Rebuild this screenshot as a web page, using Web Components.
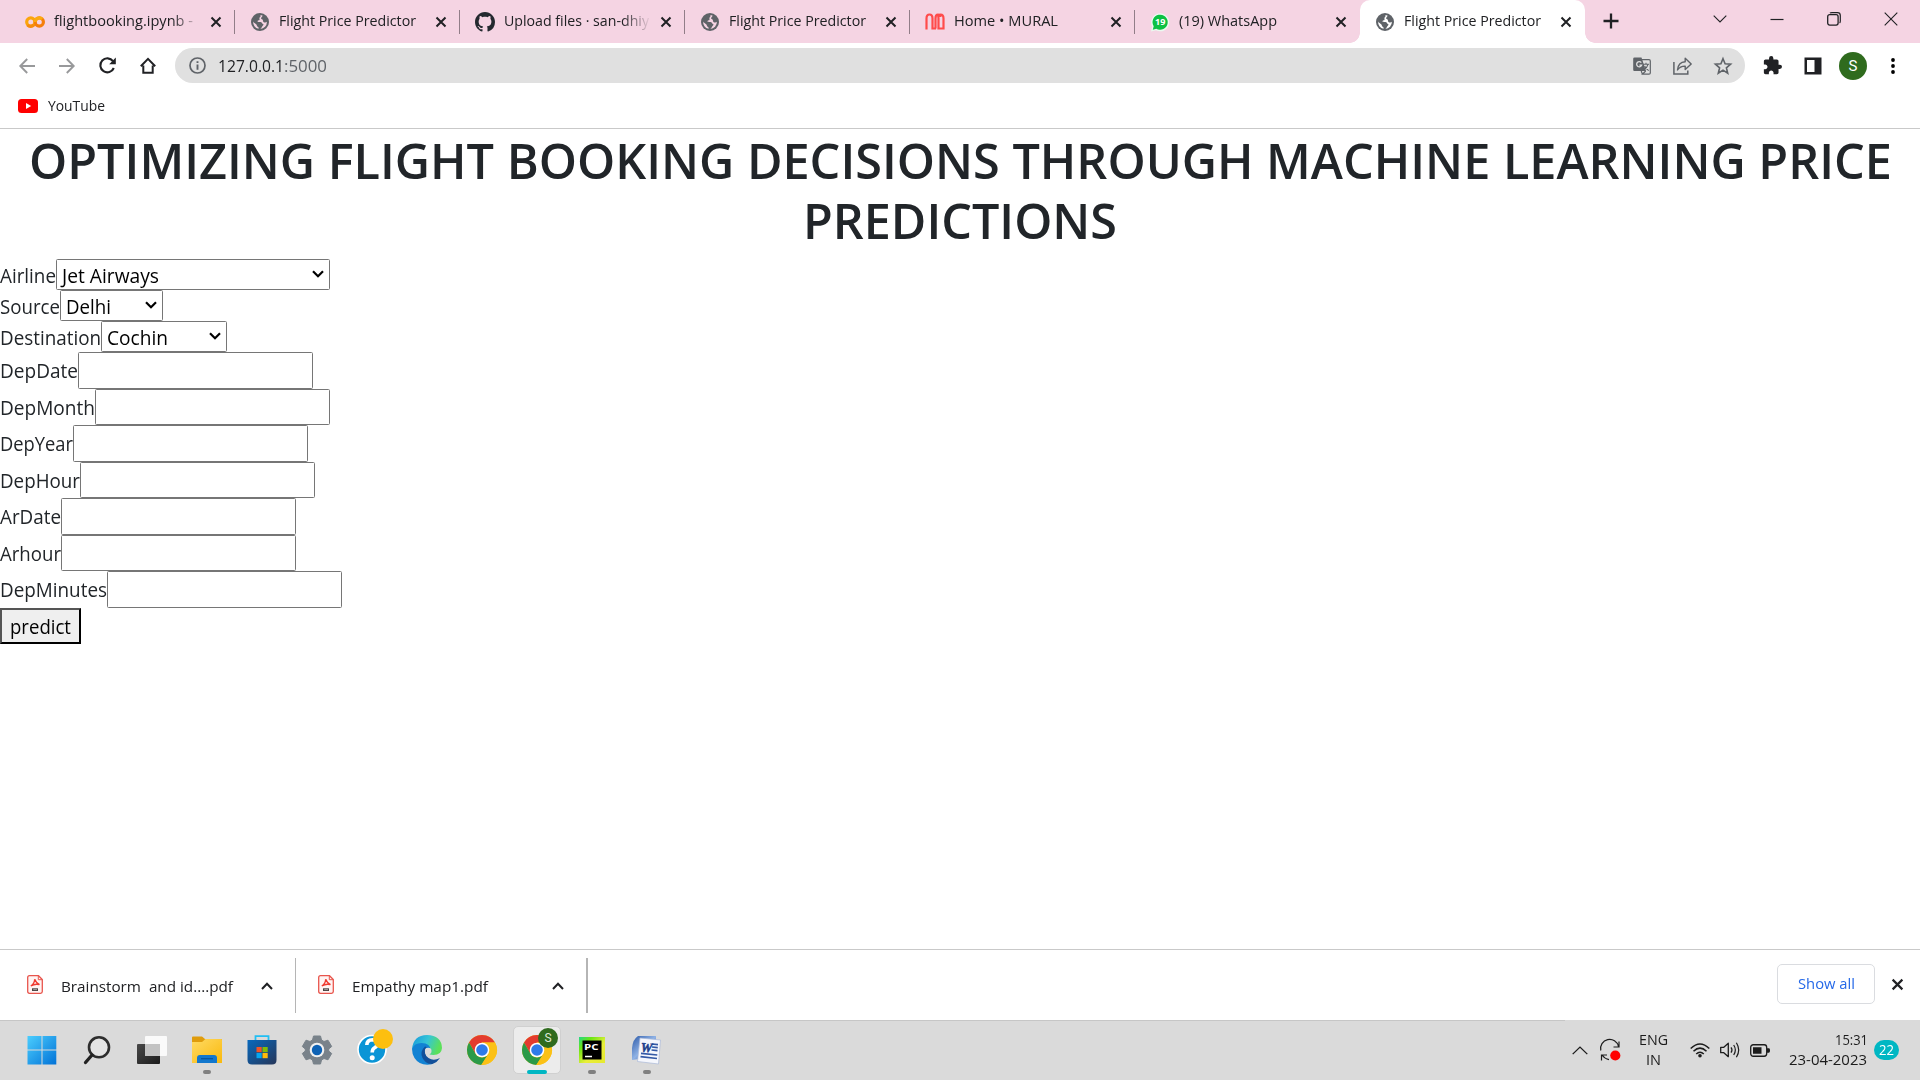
<!DOCTYPE html>
<html lang="en">
<head>
<meta charset="utf-8">
<title>Flight Price Predictor</title>
<style>
html,body{margin:0;width:1920px;height:1080px;overflow:hidden;background:#fff;font-family:"Open Sans","Noto Sans",sans-serif}
</style>
</head>
<body>
<desktop-screen></desktop-screen>
<script>
const define=(name,css,html,setup)=>{
  const t=document.createElement('template');
  t.innerHTML=`<style>*{box-sizing:border-box}${css}</style>${html}`;
  customElements.define(name,class extends HTMLElement{
    connectedCallback(){
      if(this.shadowRoot)return;
      this.attachShadow({mode:'open'}).append(t.content.cloneNode(true));
      if(setup)setup(this,this.shadowRoot);
    }
  });
};

/* Text condensed or widened to an exact advance width */
define('fit-text',':host{display:block;flex:none;white-space:nowrap}span{display:inline-block;transform-origin:0 50%;white-space:pre}','<span></span>',(h,r)=>{
  const s=r.querySelector('span');
  s.textContent=h.getAttribute('text');
  const w=+h.getAttribute('w');
  h.style.width=w+'px';
  s.style.transform=`scaleX(${w/s.getBoundingClientRect().width})`;
});

const chromeLogo='<circle cx="15" cy="15" r="15" fill="#fbc116"/><path d="M2 7.5A15 15 0 0 1 28 7.5H15L8.5 18.7Z" fill="#e33b2e"/><path d="M2 7.5A15 15 0 0 0 14.3 30L21.5 18.7A7.5 7.5 0 0 1 8.5 18.7Z" fill="#2b9a48"/><path d="M15 7.5H28A15 15 0 0 1 14.3 30L21.5 18.7Z" fill="#fbc116"/><circle cx="15" cy="15" r="7.3" fill="#fff"/><circle cx="15" cy="15" r="5.8" fill="#2e7be9"/>';
const S='fill="none" stroke="currentColor"';
const icons={
close:['0 0 12 12',`<path d="M1.5 1.5L10.5 10.5M10.5 1.5L1.5 10.5" ${S} stroke-width="2"/>`],
colab:['0 0 20 14','<circle cx="5.8" cy="7" r="4.1" fill="none" stroke="#fba50c" stroke-width="3.2"/><circle cx="14.3" cy="7" r="4.1" fill="none" stroke="#f57f0b" stroke-width="3.2"/><path d="M10 7A4.3 4.3 0 0 1 17.2 4" fill="none" stroke="#fbab10" stroke-width="3.2"/><path d="M2.5 10A4.3 4.3 0 0 0 9 9.8" fill="none" stroke="#f58b10" stroke-width="3.2"/>'],
globe:['0 0 18 18','<circle cx="9" cy="9" r="9" fill="#5f6368"/><path d="M9.300 2.100C10.200 3.300 9 4 8.500 4.700C8 5.500 9.200 6.300 8.200 7.200C7.500 7.800 6.800 7.300 6.500 8C6.300 8.700 7 8.900 8 8.900H9.500C11 9 10.700 10.300 11.500 10.700C12.600 11 12.700 11.700 12 12.500C11 13.500 10.700 15 9.300 15.900A7 7 0 0 0 15.900 8.800C15 9.500 13.500 9.700 12.500 8.900C11.500 8 12.400 7 11.500 6.400C10.500 5.900 9.700 5.700 10.200 4.700C10.700 3.900 11.300 3.500 11.700 2.700A7 7 0 0 0 9.300 2.100ZM2.100 8.500A7 7 0 0 0 7.500 15.800C7.900 14.800 7.500 14.200 6.700 13.700C5.700 13 6 12 5.200 11.200C4.300 10.400 2.900 10 2.100 8.500Z" fill="var(--cut,#f5d4e3)"/>'],
github:['0 0 16 16','<path fill="#24292f" d="M8 0C3.58 0 0 3.58 0 8c0 3.54 2.29 6.53 5.47 7.59.4.07.55-.17.55-.38 0-.19-.01-.82-.01-1.49-2.01.37-2.53-.49-2.69-.94-.09-.23-.48-.94-.82-1.13-.28-.15-.68-.52-.01-.53.63-.01 1.08.58 1.23.82.72 1.21 1.87.87 2.33.66.07-.52.28-.87.51-1.07-1.78-.2-3.64-.89-3.64-3.95 0-.87.31-1.59.82-2.15-.08-.2-.36-1.02.08-2.12 0 0 .67-.21 2.2.82.64-.18 1.32-.27 2-.27s1.36.09 2 .27c1.53-1.04 2.2-.82 2.2-.82.44 1.1.16 1.92.08 2.12.51.56.82 1.27.82 2.15 0 3.07-1.87 3.75-3.65 3.95.29.25.54.73.54 1.48 0 1.07-.01 1.93-.01 2.2 0 .21.15.46.55.38A8.01 8.01 0 0 0 16 8c0-4.42-3.58-8-8-8z"/>'],
mural:['0 0 20 17','<path d="M1.500 16.500V5.500Q1.500 1.500 4.500 1.500T7.500 5.500V15.500H11M10.500 15.500V5.500Q10.500 1.500 13 1.500T15.500 4M18.500 16.500V5.500Q18.500 1.500 15.500 1.500T13.500 5V15.500H18.500" fill="none" stroke="#ff4b4b" stroke-width="2.200"/>'],
whats:['0 0 20 20','<path d="M1 19.5L2.2 14.5A9 9 0 1 1 6 18.3Z" fill="#eafaf0"/><path d="M2.8 17.7L3.7 14.3A7.6 7.6 0 1 1 6.3 16.8Z" fill="#0cc143"/><text x="10.2" y="13.2" font-size="9" font-weight="700" fill="#fff" text-anchor="middle" font-family="Open Sans">19</text>'],
plus:['0 0 16 16',`<path d="M8 .5V15.5M.5 8H15.5" ${S} stroke-width="2.3"/>`],
chevdown:['0 0 14 8',`<path d="M.7 .7L7 7L13.3 .7" ${S} stroke-width="1.1"/>`],
min:['0 0 14 14',`<path d="M.5 7.5H13.5" ${S} stroke-width="1.2"/>`],
restore:['0 0 14 14',`<rect x=".7" y="2.7" width="10.4" height="10.4" rx="2" ${S} stroke-width="1.3"/><path d="M3 1.2Q3.4 .7 5 .7H10.5Q13.3 .7 13.3 3.5V9Q13.3 10.5 12.6 11" ${S} stroke-width="1.2"/>`],
winclose:['0 0 14 14',`<path d="M.7 .7L13.3 13.3M13.3 .7L.7 13.3" ${S} stroke-width="1.1"/>`],
back:['0 0 16 16',`<path d="M16 8H1.5M8.2 1L1.3 8L8.2 15" ${S} stroke-width="1.9"/>`],
fwd:['0 0 16 16',`<path d="M0 8H14.5M7.8 1L14.7 8L7.8 15" ${S} stroke-width="1.9"/>`],
reload:['0 0 17 17',`<path d="M14.8 11A7 7 0 1 1 14 4.2" ${S} stroke-width="2.1"/><path d="M16.8 .6V7.3H10.2Z" fill="currentColor"/>`],
home:['0 0 16 17',`<path d="M3.3 8.5V15.7H12.7V8.5M.8 9.2L8 1.9L15.2 9.2" ${S} stroke-width="2"/>`],
info:['0 0 17 17',`<circle cx="8.5" cy="8.5" r="7.5" ${S} stroke-width="1.7"/><path d="M8.5 7.5V12.8M8.5 4.3V6" ${S} stroke-width="1.9"/>`],
translate:['0 0 18 18',`<path d="M1.5 .5H8.5L13 14H1.5A1.2 1.2 0 0 1 .2 12.8V1.8A1.3 1.3 0 0 1 1.5 .5Z" fill="#5f6368"/><path d="M8.9 2.7H16Q17.3 2.7 17.3 4V16Q17.3 17.2 16 17.2H9.5L12.7 14M9.5 17.2L8.2 14" ${S} stroke-width="1.2"/><path d="M8.3 5.6A2.6 2.6 0 1 0 8.7 8.1H6.4" fill="none" stroke="#e0e0e0" stroke-width="1.3"/><path d="M10 7.2H16M13 5.8V7.2M15 7.3Q14.2 10.7 10.8 12.7M11.6 9Q12.7 11.4 15.7 13.6" ${S} stroke-width="1.1"/>`],
share:['0 0 19 18',`<path d="M.9 5V17H14.8V13.5" ${S} stroke-width="1.5"/><path d="M4.5 13Q5.2 5.2 12.2 4.8V1.2L18.2 7L12.2 12.6V9.1Q7 9 4.5 13Z" ${S} stroke-width="1.4" stroke-linejoin="round"/>`],
star:['0 0 18 18',`<path d="M9 1.7L11.1 6.8L16.6 7.2L12.4 10.8L13.7 16.2L9 13.2L4.3 16.2L5.6 10.8L1.4 7.2L6.9 6.8Z" ${S} stroke-width="1.6"/>`],
puzzle:['1 1 22 22','<path fill="currentColor" d="M20.5 11H19V7c0-1.1-.9-2-2-2h-4V3.500a2.500 2.500 0 0 0-5 0V5H4c-1.100 0-1.990.9-1.990 2v3.800H3.500c1.490 0 2.700 1.210 2.700 2.700s-1.210 2.700-2.700 2.700H2V20c0 1.100.9 2 2 2h3.800v-1.500c0-1.490 1.210-2.700 2.700-2.700s2.700 1.210 2.700 2.700V22H17c1.100 0 2-.9 2-2v-4h1.500a2.500 2.500 0 0 0 0-5z"/>'],
panel:['0 0 18 18','<path d="M.5 .5H17.500V17.500H.5ZM3 3V15H10.500V3Z" fill="currentColor" fill-rule="evenodd"/>'],
dots:['0 0 4 16','<circle cx="2" cy="2" r="1.9"/><circle cx="2" cy="8" r="1.9"/><circle cx="2" cy="14" r="1.9"/>'],
youtube:['0 0 20 14','<rect width="20" height="14" rx="3.500" fill="#f00"/><path d="M8 4L13.200 7L8 10Z" fill="#fff"/>'],
pdf:['0 0 16 19','<path d="M2.500 .7H11.500L15.300 4.500V16.500Q15.300 18.300 13.500 18.300H2.500Q.7 18.300 .7 16.500V2.500Q.7 .7 2.500 .7Z" fill="#fff4f3" stroke="#e8554d" stroke-width="1.300"/><path d="M11.300 1V4.700H15" fill="none" stroke="#e8554d"/><path d="M7.700 4.200Q9 7.800 12.500 9.700Q8 8.400 3.800 11Q7.700 8.300 7.700 4.200Z" fill="none" stroke="#f03a30" stroke-width="1.400"/><path d="M5 13.300H11V16H5Z" fill="#4a4040"/><path d="M6.200 14.600H10" stroke="#ddd" stroke-width=".6"/>'],
chevup:['0 0 12 8',`<path d="M1 7L6 1.700L11 7" ${S} stroke-width="2"/>`],
win:['0 0 30 30','<defs><linearGradient id="g" x1="0" y1="0" x2="30" y2="30" gradientUnits="userSpaceOnUse"><stop stop-color="#4dd0ff"/><stop offset="1" stop-color="#0070d6"/></linearGradient></defs><path d="M.5 1H14.500V14.500H.5ZM15.500 1H29.300V14.500H15.500ZM.5 15.500H14.500V29.500H.5ZM15.500 15.500H29.300V29.500H15.500Z" fill="url(#g)"/>'],
search:['0 0 30 30','<circle cx="17" cy="12.300" r="10" fill="#e4e4e4" stroke="#2d2d2d" stroke-width="2.600"/><path d="M10 20L3.500 27.500" stroke="#222" stroke-width="3.300" stroke-linecap="round"/>'],
taskview:['0 0 30 30','<defs><linearGradient id="g" x1="0" y1="0" x2="1" y2="1"><stop stop-color="#484848"/><stop offset="1" stop-color="#1b1b1b"/></linearGradient></defs><rect x="0" y="9" width="23" height="20" rx="1" fill="url(#g)"/><rect x="8" y="1" width="22" height="20" rx="1" fill="#fafafa"/><rect x="8" y="9" width="15" height="12" fill="#c3c3c3"/>'],
folder:['0 0 30 30','<defs><linearGradient id="g" x2="1" y2="1"><stop stop-color="#ffda63"/><stop offset="1" stop-color="#f9b90d"/></linearGradient></defs><path d="M0 2.500Q0 1.500 1 1.500H10L13 4H29Q30 4 30 5V12H0Z" fill="#df9c0c"/><path d="M0 7H10L13.500 4H29Q30 4 30 5V28H0Z" fill="url(#g)"/><path d="M5 28V23Q5 20 8 20H22Q25 20 25 23V28Z" fill="#1277cd"/><path d="M9 23.700H21" stroke="#07539a" stroke-width="1.200"/>'],
store:['0 0 30 30','<defs><linearGradient id="g" x2="1" y2="1"><stop stop-color="#0869bd"/><stop offset="1" stop-color="#263659"/></linearGradient></defs><path d="M8.500 6V1.200H21.500V6" fill="none" stroke="#20bff4" stroke-width="1.800"/><path d="M.5 5H29.500V25Q29.500 29.500 25 29.500H5Q.5 29.500 .5 25Z" fill="url(#g)"/><path d="M9.500 12H14.700V17.200H9.500Z" fill="#f35325"/><path d="M15.500 12H20.700V17.200H15.500Z" fill="#81bc06"/><path d="M9.500 18H14.700V23.200H9.500Z" fill="#05a6f0"/><path d="M15.500 18H20.700V23.200H15.500Z" fill="#ffba08"/>'],
gear:['0 0 30 30','<path d="M11.500 1H18.500L19.500 5L22 6.500L26 5.200L29.700 11.500L26.700 14V16L29.700 18.500L26 24.800L22 23.500L19.500 25L18.500 29H11.500L10.500 25L8 23.500L4 24.800L.3 18.500L3.300 16V14L.3 11.500L4 5.200L8 6.500L10.500 5Z" fill="#79828a" stroke="#79828a" stroke-linejoin="round"/><circle cx="15" cy="15" r="7.300" fill="#f1f1f1"/><circle cx="15" cy="15" r="5.200" fill="#0d62b5"/>'],
help:['0 0 36 36','<circle cx="15" cy="20.500" r="14" fill="#0a95d6" stroke="#fff" stroke-width="1.600"/><path d="M9.800 16Q10 10.700 15.500 10.700Q20.500 11 20.300 15Q20 17.500 17.300 19Q15.300 20.200 15.200 23.500" fill="none" stroke="#fff" stroke-width="3.600"/><circle cx="15.200" cy="28.700" r="2.500" fill="#fff"/><circle cx="26" cy="10" r="10" fill="#fdbf0f"/>'],
edge:['0 0 30 30','<defs><linearGradient id="g" x1="0" x2="1" y2=".3"><stop stop-color="#1696dc"/><stop offset=".55" stop-color="#35c5d6"/><stop offset="1" stop-color="#5be05a"/></linearGradient></defs><path d="M0 14Q1.500 0 15 0Q29.500 .5 30 13Q29.500 20 21.500 20Q16 20 17.500 17.500Q19 13.500 14 11.500Z" fill="url(#g)"/><path d="M0 14Q2 8 9.500 8Q18.500 8.300 18.700 15.500Q14 10.500 10.500 17Q9 26 20 29.200Q8 31.500 2.500 23Q0 19 0 14Z" fill="#1282d3"/><path d="M13 11.500Q7.500 16.500 10.500 23Q14 29.500 20.500 29Q25.500 27 28 23Q21.500 26.500 16.500 23Q10.500 18.500 14.500 12Z" fill="#12509a"/><circle cx="16.200" cy="16" r="3.300" fill="#dadada"/>'],
chrome:['0 0 30 30',chromeLogo],
pc:['0 0 26 26','<defs><linearGradient id="g" x2="1" y2="1"><stop stop-color="#21d789"/><stop offset=".25" stop-color="#6be514"/><stop offset=".6" stop-color="#e9ee3a"/><stop offset="1" stop-color="#e6e92e"/></linearGradient></defs><rect width="26" height="26" fill="url(#g)"/><rect x="3.500" y="3.500" width="19" height="19" fill="#000"/><text x="5" y="13.300" font-size="9.500" font-weight="700" fill="#fff" font-family="Open Sans" textLength="14.500" lengthAdjust="spacingAndGlyphs">PC</text><path d="M6 19.500H13" stroke="#fff" stroke-width="1.500"/>'],
word:['0 0 30 30','<defs><linearGradient id="g" x2="1" y2="1"><stop stop-color="#2d5aa9"/><stop offset=".5" stop-color="#8fb2e5"/><stop offset="1" stop-color="#2549a0"/></linearGradient></defs><path d="M7 1H25V5L8 24L1 25V13Q2 4 7 1Z" fill="url(#g)"/><path d="M9 3L29.500 5L27.500 29L6.500 26.500Z" fill="#f5f7fd" stroke="#aab9d8" stroke-width=".7"/><path d="M21 9L27 9.600M21 12L26.800 12.600M20.500 15L26.500 15.600M10 18.300L26.300 20M9.500 21.600L26 23.500" stroke="#3459a6" stroke-width="1.700"/><text x="9.500" y="16.500" transform="rotate(4 10 17)" font-family="Liberation Serif" font-style="italic" font-weight="700" font-size="13" textLength="11.500" lengthAdjust="spacingAndGlyphs" fill="#1c3f8c" stroke="#1c3f8c" stroke-width=".5">W</text>'],
traychev:['0 0 16 10',`<path d="M.7 9L8 1.300L15.300 9" ${S} stroke-width="1.300"/>`],
sync:['0 0 21 21',`<path d="M.8 10.500A9 9 0 0 1 18.500 6.500M19 1.500V7H13.500M9 19.700Q5 19 2 15M1.500 20.500V15H7" ${S} stroke-width="1.200"/><circle cx="15.300" cy="15.500" r="5.100" fill="#f00"/>`],
wifi:['0 0 20 15',`<path d="M.7 5.500Q10 -3.500 19.300 5.500M3.500 8.300Q10 2 16.500 8.300M6.200 11Q10 7.500 13.800 11" ${S} stroke-width="1.500"/><circle cx="10" cy="12.700" r="1.800" fill="currentColor"/>`],
sound:['0 0 20 16',`<path d="M.7 5.300H3.800L8.300 1.300V14.700L3.800 10.700H.7Z" ${S} stroke-width="1.300" stroke-linejoin="round"/><path d="M11 5.300Q13 8 11 10.700M13.700 3Q17 8 13.700 13M16.400 .8Q21 8 16.400 15.200" ${S} stroke-width="1.200"/>`],
battery:['0 0 20 12',`<rect x=".7" y=".7" width="16" height="10.600" rx="2.500" ${S} stroke-width="1.300"/><rect x="3" y="3" width="8.500" height="6" fill="currentColor"/><path d="M17 4H19Q20 4 20 6T19 8H17Z" fill="currentColor"/>`],
caret:['0 0 12 8',`<path d="M1 1.200L6 6.200L11 1.200" ${S} stroke-width="2.200"/>`]
};
define('ui-icon',':host{display:block;flex:none}svg{display:block;width:100%;height:100%;overflow:visible}','<i hidden></i>',(h,r)=>{
  const [vb,body]=icons[h.getAttribute('name')];
  h.style.width=h.getAttribute('w')+'px';
  h.style.height=h.getAttribute('h')+'px';
  const d=document.createElement('div');
  d.style.cssText='width:100%;height:100%';
  d.innerHTML=`<svg viewBox="${vb}" preserveAspectRatio="none">${body}</svg>`;
  r.querySelector('i').replaceWith(d);
});
const ic=(n,w,h,s='')=>`<ui-icon name="${n}" w="${w}" h="${h}" style="${s}"></ui-icon>`;
const tx=(t,w,s='')=>`<fit-text text="${t}" w="${w}" style="${s}"></fit-text>`;

define('browser-tab',`:host{display:flex;align-items:center;width:225px;height:43px;padding-left:14.500px;position:relative;color:#202124;font-size:14.5px}
.ico{width:20px;height:20px;display:flex;align-items:center;justify-content:center}
.title{width:148px;margin-left:9.500px;height:22px;line-height:20px;overflow:hidden}
:host([fade]) .title{-webkit-mask-image:linear-gradient(90deg,#000 118px,transparent 147px)}
ui-icon.x{margin-left:7.500px}
:host([sep])::after{content:"";position:absolute;right:0;top:10px;width:1px;height:24px;background:#917d88}
:host([active]){background:#fff;border-radius:10px 10px 0 0;--cut:#fff}
:host([active])::before,:host([active])::after{content:"";position:absolute;bottom:0;width:10px;height:10px}
:host([active])::before{left:-10px;background:radial-gradient(circle at 0 0,transparent 9.500px,#fff 10px)}
:host([active])::after{right:-10px;background:radial-gradient(circle at 100% 0,transparent 9.500px,#fff 10px)}`,
`<div class="ico"></div><div class="title"></div>${ic('close',12,12).replace('<ui-icon','<ui-icon class="x"')}`,(h,r)=>{
  const [n,w,hh]=h.getAttribute('icon').split(',');
  r.querySelector('.ico').innerHTML=ic(n,w,hh);
  r.querySelector('.title').innerHTML=tx(h.getAttribute('label'),h.getAttribute('tw'));
});

define('tab-strip',`:host{display:flex;height:43px;background:#f5d4e3;padding-left:10px;color:#202124}
.plus{margin:13px 0 0 18px}.win{margin-left:auto;display:flex;padding:0 22px 0 0;height:37px;align-items:center;gap:43px}`,
`<browser-tab sep fade icon="colab,20,14" label="flightbooking.ipynb -" tw="139"></browser-tab>
<browser-tab sep icon="globe,18,18" label="Flight Price Predictor" tw="137"></browser-tab>
<browser-tab sep fade icon="github,20,20" label="Upload files · san-dhiy" tw="145"></browser-tab>
<browser-tab sep icon="globe,18,18" label="Flight Price Predictor" tw="137"></browser-tab>
<browser-tab sep icon="mural,20,17" label="Home • MURAL" tw="104"></browser-tab>
<browser-tab icon="whats,20,20" label="(19) WhatsApp" tw="98"></browser-tab>
<browser-tab active icon="globe,18,18" label="Flight Price Predictor" tw="137"></browser-tab>
<div class="plus">${ic('plus',16,16)}</div>
<div class="win">${ic('chevdown',14,8)}${ic('min',14,14)}${ic('restore',14,14)}${ic('winclose',14,14)}</div>`);

define('address-bar',`:host{display:flex;align-items:center;height:45px;padding-left:19px;color:#202124}
.nav{display:flex;align-items:center;gap:24px;width:156px}
.omni{display:flex;align-items:center;width:1570px;height:35px;border-radius:18px;background:#e0e0e0;padding:0 13px 0 14px;color:#5f6368;font-size:17px;line-height:34px}
.tools{display:flex;gap:22px;margin-left:auto}
.av{width:28px;height:28px;border-radius:50%;background:#2f6b1e;color:#fff;font:15px/28px Roboto;text-align:center;margin:0 24px 0 17px}`,
`<div class="nav">${ic('back',16,16,'color:#98999b')}${ic('fwd',16,16,'color:#98999b')}${ic('reload',17,17)}${ic('home',16,17)}</div>
<div class="omni">${ic('info',17,17)}${tx('127.0.0.1',66,'margin-left:12px;color:#202124')}${tx(':5000',43)}<div class="tools">${ic('translate',18,18)}${ic('share',19,18)}${ic('star',18,18)}</div></div>
${ic('puzzle',19,19,'margin-left:18px')}${ic('panel',18,18,'margin-left:22px')}<div class="av">S</div>${ic('dots',4,16)}`);

define('bookmark-bar',`:host{display:flex;box-sizing:border-box;align-items:center;height:41px;padding:0 0 5px 18px;border-bottom:1px solid #c9c9c9;font-size:14.500px;color:#202124}`,
`${ic('youtube',20,14)}${tx('YouTube',57,'margin-left:9.500px')}`);

define('form-row',`:host{display:flex;height:36.500px;color:#212529;font-size:19.500px}
:host([kind=select]){height:31px}
.l{align-self:center;line-height:30px;position:relative;top:1px}
.box{height:36.500px;width:235px;border:1px solid #767676;border-radius:1.500px;background:#fff;display:flex;align-items:center;color:#000}
:host([kind=select]) .box{height:31px;padding-left:5px}
:host([kind=select]) .l{top:1px}
.v{position:relative;top:1px;line-height:28px}ui-icon{margin:0 5px 1px auto}`,
`<div class="l"></div><div class="box"></div>`,(h,r)=>{
  r.querySelector('.l').innerHTML=tx(h.getAttribute('label'),h.getAttribute('lw'));
  const b=r.querySelector('.box');
  if(h.getAttribute('kind')==='select'){
    b.style.width=h.getAttribute('bw')+'px';
    b.innerHTML=`<div class="v">${tx(h.getAttribute('value'),h.getAttribute('vw'))}</div>${ic('caret',12,8)}`;
  }
});

define('predictor-page',`:host{display:block;height:820px;background:#fff}
h1{margin:0;height:130px;padding-top:1px;font-size:49.500px;font-weight:600;line-height:60px;color:#212529;display:flex;flex-direction:column;align-items:center}
.btn{width:81px;height:36px;border:2px solid;border-color:#555 #000 #000 #555;background:#efefef;display:flex;justify-content:center;line-height:33px;font-size:19.500px;color:#000}`,
`<h1>${tx('OPTIMIZING FLIGHT BOOKING DECISIONS THROUGH MACHINE LEARNING PRICE',1863)}${tx('PREDICTIONS',314)}</h1>
<form-row kind="select" label="Airline" lw="56" bw="274" value="Jet Airways" vw="97"></form-row>
<form-row kind="select" label="Source" lw="60" bw="102.500" value="Delhi" vw="45"></form-row>
<form-row kind="select" label="Destination" lw="101" bw="126" value="Cochin" vw="61"></form-row>
<form-row label="DepDate" lw="78"></form-row>
<form-row label="DepMonth" lw="95"></form-row>
<form-row label="DepYear" lw="73"></form-row>
<form-row label="DepHour" lw="80"></form-row>
<form-row label="ArDate" lw="61"></form-row>
<form-row label="Arhour" lw="61"></form-row>
<form-row label="DepMinutes" lw="107"></form-row>
<div class="btn">${tx('predict',61)}</div>`);

define('download-bar',`:host{display:flex;box-sizing:border-box;height:71px;border-top:1px solid #c9c9c9;background:#fff;color:#202124;font-size:15px}
.item{display:flex;align-items:center;height:55px;margin-top:8px;border-right:1px solid #b5b5b5}
.show{width:98px;height:40px;border:1px solid #dadce0;border-radius:5px;display:flex;align-items:center;justify-content:center;color:#2468e8;font-size:15px;margin:14px 16px 0 auto;padding-bottom:2px}`,
`<div class="item" style="width:296px;padding-left:27px">${ic('pdf',16,19,'margin-bottom:3px')}${tx('Brainstorm  and id....pdf',172,'margin-left:18px')}${ic('chevup',12,8,'margin-left:27.500px')}</div>
<div class="item" style="width:292px;padding-left:22px;border-right-width:2px">${ic('pdf',16,19,'margin-bottom:3px')}${tx('Empathy map1.pdf',136,'margin-left:18px')}${ic('chevup',12,8,'margin-left:63.500px')}</div>
<div class="show">${tx('Show all',57)}</div>${ic('close',13,13,'margin:28px 16px 0 0')}`);

define('task-icon',`:host{display:flex;justify-content:center;align-items:center;width:55px;height:60px;position:relative}
:host([active])::before{content:"";position:absolute;inset:6px 3px 6px 4px;background:#ececec;border:1px solid #d0d0d0;border-radius:5px}
ui-icon{position:relative}
:host([run])::after{content:"";position:absolute;left:24px;bottom:6px;width:8px;height:4px;border-radius:2px;background:#808080}
:host([active])::after{left:17.500px;width:20px;background:#00b7c3}
.b{position:absolute;left:29px;top:8px;width:20px;height:20px;border-radius:50%;background:#2f6b1e;color:#dfe9d9;font:12px/21px Roboto;text-align:center}`,'',(h,r)=>{
  const [n,w,hh,y=0,x=0]=h.getAttribute('icon').split(',');
  r.innerHTML+=ic(n,w,hh,`top:${y}px;left:${x}px`)+(h.hasAttribute('active')?'<div class="b">S</div>':'');
});

define('task-bar',`:host{display:flex;box-sizing:border-box;height:60px;background:#dadada;padding-left:14px;color:#1c1c1c;font-size:14.500px;position:relative}
:host::before{content:"";position:absolute;left:0;top:0;width:1565px;height:1px;background:#c6c6c6}
.tray{margin-left:auto;display:flex;align-items:center;padding-right:21px}
.col{display:flex;flex-direction:column;line-height:20px}
.n{width:25px;height:20px;border-radius:10px;background:#00b7c3;color:#fff;display:flex;justify-content:center;line-height:20px;margin-left:7px;font-size:14px}`,
`<task-icon icon="win,30,30"></task-icon><task-icon icon="search,30,30"></task-icon><task-icon icon="taskview,30,30"></task-icon><task-icon run icon="folder,30,30"></task-icon><task-icon icon="store,30,30"></task-icon><task-icon icon="gear,30,30"></task-icon><task-icon icon="help,36,36,-3,3"></task-icon><task-icon icon="edge,30,30"></task-icon><task-icon icon="chrome,30,30"></task-icon><task-icon run active icon="chrome,30,30"></task-icon><task-icon run icon="pc,26,26"></task-icon><task-icon run icon="word,30,30,0,-1"></task-icon>
<div class="tray">${ic('traychev',16,9)}${ic('sync',21,21,'margin-left:12px')}
<div class="col" style="align-items:center;margin-left:17px;width:30px">${tx('ENG',29)}${tx('IN',15)}</div>
${ic('wifi',20,15,'margin-left:22px')}${ic('sound',20,16,'margin-left:10px')}${ic('battery',20,13,'margin-left:10px')}
<div class="col" style="align-items:flex-end;margin-left:19px;width:78px">${tx('15:31',33,'position:relative;left:1px')}${tx('23-04-2023',78)}</div>
<div class="n">${tx('22',15)}</div></div>`);

define('desktop-screen',':host{display:flex;flex-direction:column;width:1920px;height:1080px;font-family:"Open Sans","Noto Sans",sans-serif}',
'<tab-strip></tab-strip><address-bar></address-bar><bookmark-bar></bookmark-bar><predictor-page></predictor-page><download-bar></download-bar><task-bar></task-bar>');
</script>
</body>
</html>
